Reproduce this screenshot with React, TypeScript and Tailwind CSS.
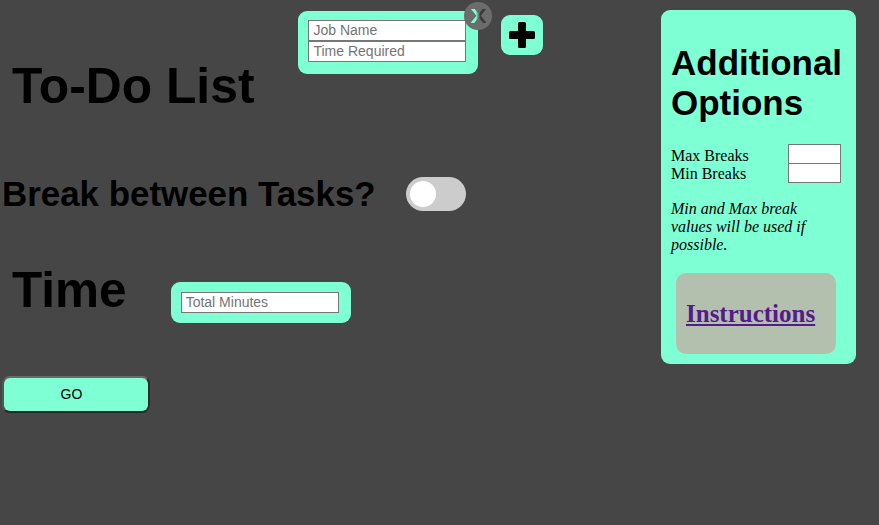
const sans = "font-['Liberation_Sans',Arial,sans-serif]"
const serif = "font-['Liberation_Serif','Times_New_Roman',serif]"

const Field = ({ placeholder, className = '' }: { placeholder?: string; className?: string }) => (
  <input
    placeholder={placeholder}
    className={`block h-[21px] w-[158px] border border-[#767676] bg-white px-[4px] text-[14px] text-black outline-none placeholder:text-[#757575] ${sans} ${className}`}
  />
)

const PlusIcon = () => (
  <svg width="26" height="26" viewBox="0 0 26 26">
    <rect x="9" y="0" width="8" height="26" rx="1.5" fill="#000" />
    <rect x="0" y="9" width="26" height="8" rx="1.5" fill="#000" />
  </svg>
)

const Toggle = () => (
  <div className="flex h-[34px] w-[60px] items-center rounded-[17px] bg-[#cccccc] px-[4px]">
    <div className="h-[26px] w-[26px] rounded-full bg-white" />
  </div>
)

const JobCard = () => (
  <div className="relative mt-[11px] ml-[44px] rounded-[9px] bg-[#7fffd4] pt-[9px] pr-[12px] pb-[12px] pl-[10px]">
    <Field placeholder="Job Name" />
    <Field placeholder="Time Required" />
    <button className="absolute top-[-9px] left-[166px] flex h-[28px] w-[28px] items-center justify-center rounded-full bg-[#6c6c6c]">
      <span
        className={`scale-x-125 bg-[linear-gradient(90deg,#7fffd4_0%,#7fffd4_35%,#3c3c3c_60%,#3c3c3c_100%)] bg-clip-text text-[20px] leading-none font-bold text-transparent ${sans}`}
      >
        X
      </span>
    </button>
  </div>
)

const OptionsPanel = () => (
  <aside className="mt-[10px] mr-[23px] flex h-[354px] w-[195px] flex-col rounded-[9px] bg-[#7fffd4] pt-[33px] pl-[10px]">
    <h1 className={`text-[35px] leading-[40px] font-bold text-black ${sans}`}>
      Additional
      <br />
      Options
    </h1>
    <div className="mt-[21px] flex items-center">
      <div className={`w-[117px] pt-[2px] text-[16px] leading-[18px] text-black ${serif}`}>
        <div>Max Breaks</div>
        <div>Min Breaks</div>
      </div>
      <div>
        <input className="block h-[20px] w-[53px] border border-[#767676] bg-white outline-none" />
        <input className="block h-[19px] w-[53px] border border-t-0 border-[#767676] bg-white outline-none" />
      </div>
    </div>
    <p className={`mt-[17px] w-[150px] text-[16px] leading-[18px] text-black italic ${serif}`}>
      Min and Max break values will be used if possible.
    </p>
    <div className="mt-[19px] ml-[5px] flex h-[81px] w-[160px] items-center rounded-[10px] bg-[#b3c0ae] pl-[10px]">
      <a href="#" className={`text-[25px] leading-[29px] font-bold text-[#551a8b] underline ${serif}`}>
        Instructions
      </a>
    </div>
  </aside>
)

export default function App() {
  return (
    <div className={`flex min-h-screen w-full bg-[#464646] ${sans}`}>
      <main className="flex flex-1 flex-col">
        <div className="flex items-start">
          <h1 className="mt-[58px] ml-[12px] text-[49.8px] leading-[56px] font-bold text-black">To-Do List</h1>
          <JobCard />
          <button className="mt-[15px] ml-[23px] flex h-[40px] w-[42px] items-center justify-center rounded-[9px] bg-[#7fffd4]">
            <PlusIcon />
          </button>
        </div>

        <div className="mt-[60px] flex h-[40px] items-center">
          <h2 className="ml-[2px] text-[34.9px] leading-[40px] font-bold text-black">Break between Tasks?</h2>
          <div className="ml-[30px]">
            <Toggle />
          </div>
        </div>

        <div className="mt-[48px] flex items-start">
          <h1 className="ml-[12px] text-[49.5px] leading-[56px] font-bold text-black">Time</h1>
          <div className="mt-[20px] ml-[44px] rounded-[9px] bg-[#7fffd4] p-[10px] pr-[12px]">
            <Field placeholder="Total Minutes" />
          </div>
        </div>

        <button className="mt-[53px] ml-[2px] h-[37px] w-[148px] rounded-[8px] border-2 border-t-[#6a6a6a] border-r-[#2a2a2a] border-b-[#262626] border-l-[#555555] bg-[#7fffd4] pr-[9px] text-[14px] text-black">
          GO
        </button>
      </main>

      <OptionsPanel />
    </div>
  )
}
